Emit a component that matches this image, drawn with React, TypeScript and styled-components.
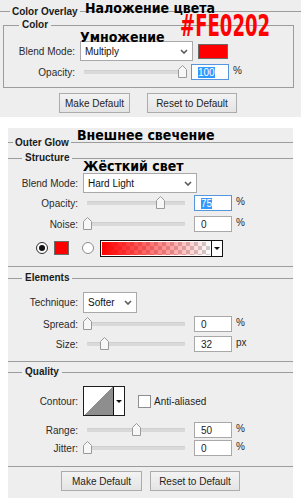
import React from "react";
import styled, { createGlobalStyle } from "styled-components";

const GlobalStyle = createGlobalStyle`
  html, body {
    margin: 0;
    padding: 0;
    background: #ffffff;
  }
  body {
    font-family: "Liberation Sans", Arial, sans-serif;
    font-size: 10px;
    color: #222;
  }
`;

const Page = styled.div`
  position: relative;
  width: 301px;
  height: 498px;
  overflow: hidden;
`;

const TopPanel = styled.section`
  height: 117px;
  background: #eeeeee;
  display: flex;
  flex-direction: column;
`;

const LowerPanel = styled.section`
  margin: 11px 0 0 8px;
  width: 285px;
  height: 370px;
  background: #eeeeee;
  display: flex;
  flex-direction: column;
`;

const HeadRow = styled.div<{ $dash: number; $pt: number }>`
  display: flex;
  align-items: center;
  height: 14px;
  padding-top: ${(p) => p.$pt}px;

  &::before,
  &::after {
    content: "";
    height: 1px;
    background: #9c9c9c;
  }
  &::before {
    width: ${(p) => p.$dash}px;
  }
  &::after {
    flex: 1;
  }
`;

const HeadText = styled.span`
  padding: 0 2px;
  font-weight: bold;
  color: #1b1b1b;
`;

const Group = styled.fieldset<{ $boxed?: boolean; $mt: number; $pt: number; $pb: number; $mx?: string }>`
  margin: ${(p) => p.$mt}px ${(p) => p.$mx ?? "0"};
  margin-bottom: 0;
  padding: ${(p) => p.$pt}px 0 ${(p) => p.$pb}px;
  min-width: 0;
  border: 1px solid #9c9c9c;
  ${(p) => (p.$boxed ? "" : "border-left: none; border-right: none;")}
`;

const Legend = styled.legend<{ $ml: number }>`
  margin-left: ${(p) => p.$ml}px;
  padding: 0 3px;
  height: 14px;
  line-height: 14px;
  font-weight: bold;
  color: #1b1b1b;
`;

const Row = styled.div<{ $h: number; $mt?: number; $pl?: number }>`
  display: flex;
  align-items: center;
  height: ${(p) => p.$h}px;
  margin-top: ${(p) => p.$mt ?? 0}px;
  padding-left: ${(p) => p.$pl ?? 0}px;
`;

const Label = styled.span<{ $w: number }>`
  flex: none;
  width: ${(p) => p.$w}px;
  margin-right: 5px;
  text-align: right;
  white-space: nowrap;
  color: #2a2a2a;
`;

const Select = styled.div<{ $w: number; $h: number }>`
  box-sizing: border-box;
  flex: none;
  display: flex;
  align-items: center;
  justify-content: space-between;
  width: ${(p) => p.$w}px;
  height: ${(p) => p.$h}px;
  padding: 0 4px;
  background: #ffffff;
  border: 1px solid #a9a9a9;
  color: #111;
`;

const Swatch = styled.span<{ $w: number; $h: number; $ml: number }>`
  box-sizing: border-box;
  flex: none;
  width: ${(p) => p.$w}px;
  height: ${(p) => p.$h}px;
  margin-left: ${(p) => p.$ml}px;
  background: #ff0000;
  border: 1px solid #6a6a6a;
`;

const SliderBox = styled.div`
  position: relative;
  flex: none;
  box-sizing: border-box;
  display: flex;
  align-items: center;
  width: 107px;
  height: 18px;
  padding: 0 5px 0 4px;
`;

const Track = styled.div`
  flex: 1;
  height: 3px;
  background: #d9d9d9;
  border-top: 1px solid #cfcfcf;
`;

const ThumbSvg = styled.svg`
  position: absolute;
  top: 2px;
`;

const NumField = styled.div<{ $focus?: boolean }>`
  box-sizing: border-box;
  flex: none;
  display: flex;
  align-items: center;
  width: 38px;
  height: 16px;
  margin-left: 4px;
  padding-left: 6px;
  background: #ffffff;
  border: 1px solid ${(p) => (p.$focus ? "#5596dc" : "#a8a8a8")};
  color: #222;
`;

const Picked = styled.span`
  background: #3399ff;
  color: #ffffff;
`;

const Unit = styled.span`
  margin-left: 4px;
  margin-top: -4px;
  color: #2a2a2a;
`;

const Radio = styled.span<{ $on?: boolean; $ml: number }>`
  box-sizing: border-box;
  flex: none;
  display: flex;
  align-items: center;
  justify-content: center;
  width: 12px;
  height: 12px;
  margin-left: ${(p) => p.$ml}px;
  border-radius: 50%;
  border: 1px solid ${(p) => (p.$on ? "#2e2e2e" : "#8c8c8c")};
  background: #ffffff;

  &::after {
    content: "";
    display: ${(p) => (p.$on ? "block" : "none")};
    width: 6px;
    height: 6px;
    border-radius: 50%;
    background: #111;
  }
`;

const GradientPick = styled.div`
  box-sizing: border-box;
  flex: none;
  display: flex;
  width: 123px;
  height: 17px;
  margin-left: 6px;
  border: 1px solid #111;
`;

const GradientFill = styled.div`
  flex: 1;
  border: 1px solid #ffffff;
  background: linear-gradient(to right, #ff0000 0%, rgba(255, 0, 0, 0.55) 45%, rgba(255, 0, 0, 0) 100%),
    conic-gradient(#cfcfcf 25%, #ffffff 0 50%, #cfcfcf 0 75%, #ffffff 0) 0 0 / 8px 8px;
`;

const DropArrow = styled.div`
  flex: none;
  width: 10px;
  display: flex;
  align-items: center;
  justify-content: center;
  background: #ffffff;
  border-left: 1px solid #111;

  &::after {
    content: "";
    border-left: 3px solid transparent;
    border-right: 3px solid transparent;
    border-top: 3px solid #111;
  }
`;

const ContourPick = styled.div`
  box-sizing: border-box;
  flex: none;
  display: flex;
  width: 42px;
  height: 30px;
  border: 1px solid #1e1e1e;
  background: #ffffff;
`;

const ContourPreview = styled.div`
  flex: 1;
  background: linear-gradient(to top left, #8e8e8e 50%, #ffffff 50%);
`;

const Checkbox = styled.span`
  box-sizing: border-box;
  flex: none;
  width: 13px;
  height: 13px;
  margin-left: 13px;
  background: #ffffff;
  border: 1px solid #8e8e8e;
`;

const CheckLabel = styled.span`
  margin-left: 3px;
  color: #1e1e1e;
`;

const ButtonBar = styled.div<{ $mt: number; $pl?: number; $gap: number; $center?: boolean }>`
  display: flex;
  justify-content: ${(p) => (p.$center ? "center" : "flex-start")};
  gap: ${(p) => p.$gap}px;
  margin-top: ${(p) => p.$mt}px;
  padding-left: ${(p) => p.$pl ?? 0}px;
`;

const Button = styled.button<{ $w: number }>`
  box-sizing: border-box;
  width: ${(p) => p.$w}px;
  height: 20px;
  padding: 0;
  font-family: "Liberation Sans", Arial, sans-serif;
  font-size: 10px;
  color: #1e1e1e;
  background: linear-gradient(#f3f3f3, #e4e4e4);
  border: 1px solid #acacac;
`;

const Note = styled.span<{ $x: number; $y: number }>`
  position: absolute;
  left: ${(p) => p.$x}px;
  top: ${(p) => p.$y}px;
  font-family: "DejaVu Sans Condensed", "DejaVu Sans", sans-serif;
  font-stretch: condensed;
  font-weight: bold;
  font-size: 14px;
  line-height: 1;
  color: #000000;
  white-space: nowrap;
`;

const HexNote = styled(Note)`
  font-size: 30px;
  color: #fe0202;
  transform: scaleX(0.67);
  transform-origin: left top;
`;

const Chevron = () => (
  <svg width="8" height="5" viewBox="0 0 8 5">
    <path d="M1 1 L4 4 L7 1" fill="none" stroke="#5a5a5a" strokeWidth="1.6" />
  </svg>
);

const Slider: React.FC<{ value: number; max?: number }> = ({ value, max = 100 }) => (
  <SliderBox>
    <Track />
    <ThumbSvg width="9" height="13" viewBox="0 0 9 13" style={{ left: 4 + (value / max) * 98 - 4.5 }}>
      <path d="M0.5 4.5 L4.5 0.5 L8.5 4.5 V12.5 H0.5 Z" fill="#f7f7f7" stroke="#9a9a9a" />
    </ThumbSvg>
  </SliderBox>
);

const App: React.FC = () => {
  return (
    <Page>
      <GlobalStyle />
      <TopPanel>
        <HeadRow $dash={10} $pt={4}>
          <HeadText>Color Overlay</HeadText>
        </HeadRow>
        <Group $boxed $mt={0} $mx="7px 0 3px" $pt={9} $pb={6}>
          <Legend $ml={15}>Color</Legend>
          <Row $h={20}>
            <Label $w={71}>Blend Mode:</Label>
            <Select $w={113} $h={20}>
              <span>Multiply</span>
              <Chevron />
            </Select>
            <Swatch $w={30} $h={15} $ml={5} />
          </Row>
          <Row $h={18} $mt={2}>
            <Label $w={71}>Opacity:</Label>
            <Slider value={100} />
            <NumField $focus>
              <Picked>100</Picked>
            </NumField>
            <Unit>%</Unit>
          </Row>
        </Group>
        <ButtonBar $mt={5} $pl={59} $gap={17}>
          <Button $w={71}>Make Default</Button>
          <Button $w={90}>Reset to Default</Button>
        </ButtonBar>
      </TopPanel>

      <LowerPanel>
        <HeadRow $dash={5} $pt={7}>
          <HeadText>Outer Glow</HeadText>
        </HeadRow>

        <Group $mt={2} $pt={8} $pb={9}>
          <Legend $ml={14}>Structure</Legend>
          <Row $h={20}>
            <Label $w={70}>Blend Mode:</Label>
            <Select $w={114} $h={20}>
              <span>Hard Light</span>
              <Chevron />
            </Select>
          </Row>
          <Row $h={18} $mt={1}>
            <Label $w={70}>Opacity:</Label>
            <Slider value={75} />
            <NumField $focus>
              <Picked>75</Picked>
            </NumField>
            <Unit>%</Unit>
          </Row>
          <Row $h={18} $mt={3}>
            <Label $w={70}>Noise:</Label>
            <Slider value={0} />
            <NumField>0</NumField>
            <Unit>%</Unit>
          </Row>
          <Row $h={18} $mt={6} $pl={28}>
            <Radio $on $ml={0} />
            <Swatch $w={15} $h={14} $ml={6} />
            <Radio $ml={13} />
            <GradientPick>
              <GradientFill />
              <DropArrow />
            </GradientPick>
          </Row>
        </Group>

        <Group $mt={4} $pt={7} $pb={8}>
          <Legend $ml={14}>Elements</Legend>
          <Row $h={21}>
            <Label $w={70}>Technique:</Label>
            <Select $w={54} $h={21}>
              <span>Softer</span>
              <Chevron />
            </Select>
          </Row>
          <Row $h={18} $mt={2}>
            <Label $w={70}>Spread:</Label>
            <Slider value={0} />
            <NumField>0</NumField>
            <Unit>%</Unit>
          </Row>
          <Row $h={18} $mt={2}>
            <Label $w={70}>Size:</Label>
            <Slider value={32} max={175} />
            <NumField>32</NumField>
            <Unit>px</Unit>
          </Row>
        </Group>

        <Group $mt={3} $pt={7} $pb={9}>
          <Legend $ml={14}>Quality</Legend>
          <Row $h={30}>
            <Label $w={70}>Contour:</Label>
            <ContourPick>
              <ContourPreview />
              <DropArrow />
            </ContourPick>
            <Checkbox />
            <CheckLabel>Anti-aliased</CheckLabel>
          </Row>
          <Row $h={18} $mt={5}>
            <Label $w={70}>Range:</Label>
            <Slider value={50} />
            <NumField>50</NumField>
            <Unit>%</Unit>
          </Row>
          <Row $h={18}>
            <Label $w={70}>Jitter:</Label>
            <Slider value={0} />
            <NumField>0</NumField>
            <Unit>%</Unit>
          </Row>
        </Group>

        <ButtonBar $mt={4} $gap={8} $center>
          <Button $w={81}>Make Default</Button>
          <Button $w={90}>Reset to Default</Button>
        </ButtonBar>
      </LowerPanel>

      <Note $x={85} $y={1}>Наложение цвета</Note>
      <HexNote $x={180} $y={11}>#FE0202</HexNote>
      <Note $x={80} $y={30}>Умножение</Note>
      <Note $x={77} $y={128}>Внешнее свечение</Note>
      <Note $x={83} $y={159}>Жёсткий свет</Note>
    </Page>
  );
};

export default App;
